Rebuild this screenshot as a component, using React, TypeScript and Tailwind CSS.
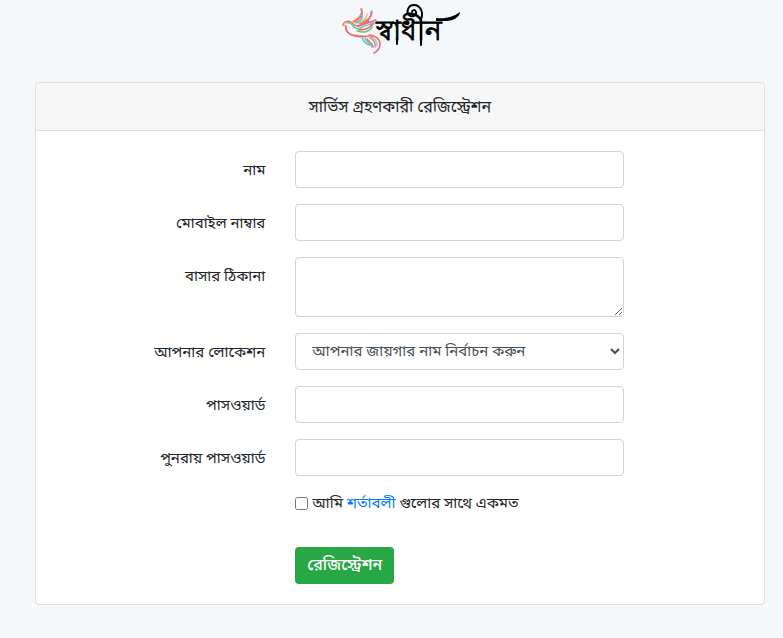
import type { ReactNode } from 'react';

const control =
  'block h-[37px] w-full rounded border border-[#ced4da] bg-white px-3 text-[15px] text-[#495057] outline-none focus:border-[#80bdff]';

function Row({ id, label, children }: { id: string; label: string; children: ReactNode }) {
  return (
    <div className="mb-4 grid grid-cols-12">
      <label htmlFor={id} className="col-span-4 px-[15px] pt-2 text-right leading-6">
        {label}
      </label>
      <div className="col-span-6 px-[15px]">{children}</div>
    </div>
  );
}

function Logo() {
  return (
    <svg
      role="img"
      aria-label="স্বাধীন"
      viewBox="0 0 120 56"
      className="h-14 w-[120px]"
      fill="none"
      strokeLinecap="round"
      strokeLinejoin="round"
    >
      <g strokeWidth="1.5" opacity="0.85">
        <path d="M3 25c1-4 6-5 9-2 2 2 4 4 7 3 4-1 6-4 10-5" stroke="#f0524f" />
        <path d="M3 25l3 1c0 3 1 6 4 8 4 2 9 1 13 2" stroke="#f58a3c" />
        <path d="M6 27c-1 5 4 8 9 9 7 2 11-1 18 1" stroke="#ef4b62" />
        <path d="M7 23c3-1 5 1 6 3 2 3 5 3 8 3" stroke="#59bf83" />
        <path d="M12 22c4-3 10-5 10-13" stroke="#f6a340" />
        <path d="M21 9c3 5 0 9-7 13" stroke="#ee4d58" />
        <path d="M21 14c3 4-1 7-5 9" stroke="#3aa7dc" />
        <path d="M19 23c6-2 13-4 13-12" stroke="#45b6c8" />
        <path d="M31 12c1 6-5 10-11 12" stroke="#ee5968" />
        <path d="M27 14c0 4-4 7-8 9" stroke="#f5b63e" />
        <path d="M18 26c6-2 11-3 18-6" stroke="#f0524f" />
        <path d="M20 28c5-3 10-3 14-5" stroke="#53b7d8" />
        <path d="M19 30c6 0 11-2 14-6" stroke="#f0524f" />
        <path d="M17 31c6 2 12 1 15-4" stroke="#58bd7b" />
        <path d="M29 35c6 0 11 4 11 9 0 4-2 7-6 9" stroke="#ef4d60" />
        <path d="M28 37c6-1 9 4 9 9" stroke="#f7a140" />
        <path d="M22 37c1 4 3 7 8 8" stroke="#44b4d4" />
        <path d="M25 38c0 4 5 4 7 9" stroke="#58bd7b" />
        <path d="M30 38c4 2 6 5 5 9" stroke="#5aa9e6" />
        <path d="M27 39c2 3 6 4 6 8" stroke="#f0524f" />
      </g>
      <text
        x="36"
        y="40"
        fill="#000"
        stroke="#000"
        strokeWidth="0.9"
        className="font-['Liberation_Sans',sans-serif] text-[28px] font-normal"
      >
        স্বাধীন
      </text>
      <g stroke="#000" strokeWidth="2">
        <path d="M81 19c3-7-1-14-7-14-6 0-8 7-5 10 3 3 8 0 7-3-1-3-4-2-4 0" />
        <path d="M81 19v26M57 38v6" />
      </g>
      <path d="M96 18c10 1 17-1 24-6 0 5-7 9-14 9h-10z" fill="#000" />
    </svg>
  );
}

export default function App() {
  return (
    <div className="min-h-screen bg-[#f5f8fb] pr-[18px] pb-8 pl-[35px] font-['Noto_Sans_Bengali','Noto_Sans',sans-serif] text-[15px] text-[#212529]">
      <header className="flex h-[82px] justify-center">
        <Logo />
      </header>
      <main className="rounded border border-[#dfdfdf] bg-white">
        <h1 className="rounded-t border-b border-[#dfdfdf] bg-[#f7f7f7] px-5 pt-[14px] pb-[10px] text-center text-base leading-[23px]">
          সার্ভিস গ্রহণকারী রেজিস্ট্রেশন
        </h1>
        <form className="px-[5px] py-5" onSubmit={(e) => e.preventDefault()}>
          <Row id="name" label="নাম">
            <input id="name" type="text" className={control} />
          </Row>
          <Row id="mobile" label="মোবাইল নাম্বার">
            <input id="mobile" type="text" className={control} />
          </Row>
          <Row id="address" label="বাসার ঠিকানা">
            <textarea
              id="address"
              className="block h-[60px] w-full resize rounded border border-[#ced4da] bg-white px-3 py-1.5 text-[15px] text-[#495057] outline-none focus:border-[#80bdff]"
            />
          </Row>
          <Row id="location" label="আপনার লোকেশন">
            <select
              id="location"
              className="block h-[37px] w-full rounded border border-[#ced4da] bg-white pl-3 text-[15px] text-[#495057] outline-none focus:border-[#80bdff]"
            >
              <option>আপনার জায়গার নাম নির্বাচন করুন</option>
            </select>
          </Row>
          <Row id="password" label="পাসওয়ার্ড">
            <input id="password" type="password" className={control} />
          </Row>
          <Row id="confirm" label="পুনরায় পাসওয়ার্ড">
            <input id="confirm" type="password" className={control} />
          </Row>
          <div className="mb-8 grid grid-cols-12">
            <div className="col-span-6 col-start-5 flex h-[23px] items-center gap-1 px-[15px] whitespace-nowrap">
              <input id="agree" type="checkbox" className="size-[13px]" />
              <label htmlFor="agree" className="pt-0.5">
                আমি <a href="#terms" className="text-[#007bff]">শর্তাবলী</a> গুলোর সাথে একমত
              </label>
            </div>
          </div>
          <div className="grid grid-cols-12">
            <div className="col-span-6 col-start-5 px-[15px]">
              <button type="submit" className="h-[37px] rounded bg-[#28a745] px-3 text-base font-medium text-white">
                রেজিস্ট্রেশন
              </button>
            </div>
          </div>
        </form>
      </main>
    </div>
  );
}
